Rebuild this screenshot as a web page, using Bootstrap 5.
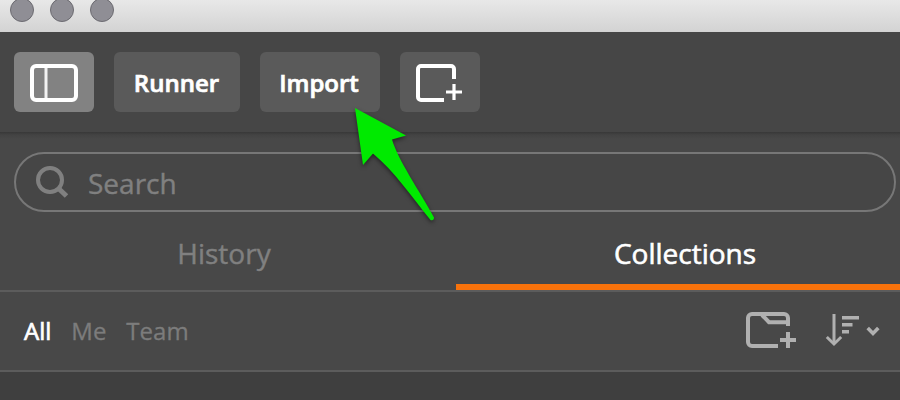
<!DOCTYPE html>
<html lang="en">
<head>
<meta charset="utf-8">
<meta name="viewport" content="width=device-width, initial-scale=1">
<title>Collections</title>
<link href="https://cdn.jsdelivr.net/npm/bootstrap@5.3.0/dist/css/bootstrap.min.css" rel="stylesheet">
<style>
body{width:900px;height:400px;background:#3f3f3f;font-family:"Open Sans",sans-serif;color:#fff}
.titlebar{height:32px;background:linear-gradient(#e8e8e8,#d3d3d3);padding-left:10px;gap:16px}
.dot{width:24px;height:24px;margin-top:-2px;border-radius:50%;background:#8f8e95;border:1.5px solid #6c6b71}
.toolbar{height:100px;background:#464646;padding-left:14px;gap:20px}
.tool{height:60px;width:80px;border:0;border-radius:6px;background:#5a5a5a;padding:0;color:#fff;font-size:24px;font-weight:600;line-height:62px;-webkit-text-stroke:.7px}
.tool:hover{background:#5a5a5a;color:#fff}
.tool.pressed{background:#828282}
.tool-runner{width:126px;padding-right:1px}
.tool-import{width:120px;padding-right:2px}
.sidebar{height:240px;background:linear-gradient(#383838,#434343 3px,#484848 7px);border-bottom:2px solid #5c5c5c}
.search{height:60px;margin:20px 4px 0 14px;border:2px solid #777;border-radius:30px;padding-left:20px;font-size:28px;color:#808080;background:#464646}
.search-text{padding-top:2px;-webkit-text-stroke:.4px}
.tabs{height:80px;border-bottom:2px solid #5c5c5c;font-size:28px;-webkit-text-stroke:.4px}
.tab{line-height:82px;color:#808080}
.tab-history{width:456px;padding-right:8px}
.tab-coll{width:444px;padding-left:14px;color:#fff;border-bottom:6px solid #f8720b;-webkit-text-stroke:.6px}
.filters{height:78px;padding:0 20px 0 24px;font-size:24px;color:#7c7c7c;-webkit-text-stroke:.3px}
.filters .current{color:#fff;-webkit-text-stroke:.7px}
svg{display:block;flex:none}
.pointer{left:340px;top:95px;filter:drop-shadow(0 2px 2px rgba(0,0,0,.5))}
</style>
</head>
<body class="position-relative overflow-hidden">
<header class="titlebar d-flex align-items-start"><span class="dot"></span><span class="dot"></span><span class="dot"></span></header>
<nav class="toolbar d-flex align-items-center">
  <button class="btn tool pressed d-flex align-items-center justify-content-center" aria-label="Toggle sidebar">
    <svg width="48" height="40" viewBox="0 0 48 40" fill="none" stroke="#fff"><rect x="2" y="4" width="44" height="34" rx="4" stroke-width="4"/><path d="M16 5v32" stroke-width="3" stroke-opacity=".9"/></svg>
  </button>
  <button class="btn tool tool-runner"><span>Runner</span></button>
  <button class="btn tool tool-import"><span>Import</span></button>
  <button class="btn tool" aria-label="New window">
    <svg width="80" height="60" viewBox="0 0 80 60" fill="none" stroke="#fff"><path d="M44 48H21a3 3 0 0 1-3-3V17a3 3 0 0 1 3-3H51a3 3 0 0 1 3 3V27" stroke-width="4"/><path d="M46 40H62M54 32V48" stroke-width="3.200"/></svg>
  </button>
</nav>
<main class="sidebar d-flex flex-column">
  <div class="search d-flex align-items-center">
    <svg width="52" height="56" viewBox="0 0 52 56" fill="none" stroke="#808080"><circle cx="14" cy="26" r="12" stroke-width="4"/><path d="M22 34l8.500 8" stroke-width="5"/></svg>
    <span class="search-text">Search</span>
  </div>
  <div class="tabs d-flex text-center">
    <div class="tab tab-history"><span>History</span></div>
    <div class="tab tab-coll"><span>Collections</span></div>
  </div>
  <div class="filters d-flex align-items-center">
    <span class="current">All</span><span class="ms-3 ps-1">Me</span><span class="ms-3 ps-1">Team</span>
    <svg class="ms-auto" width="136" height="48" viewBox="0 -4 136 48" fill="none" stroke="#b0b0b0">
      <path d="M34 35H8a4 4 0 0 1-4-4V7a4 4 0 0 1 4-4H40a4 4 0 0 1 4 4V15" stroke-width="4"/>
      <path d="M18 4l7 7.200H44" stroke-width="4"/><path d="M36 29H52M44 21V37" stroke-width="4"/>
      <path d="M90 3V33" stroke-width="3"/><path d="M82.800 26L90 33l7.200-7" stroke-width="3"/>
      <path d="M98 6.800h17M98 13.700h10.500M98 20.700h7" stroke-width="3.600"/>
      <path d="M123.700 17l5.300 5.400 5.300-5.400" stroke-width="3.600"/>
    </svg>
  </div>
</main>
<svg class="pointer position-absolute" width="110" height="135" viewBox="0 0 110 135"><path fill="#00ea00" d="M15 13L66 40.500L52 44.500C58 65 79 95 94 122.500Q94 126 90.500 125C71 101 55 77 33 58.500L23 70Z"/></svg>
<script src="https://cdn.jsdelivr.net/npm/bootstrap@5.3.0/dist/js/bootstrap.bundle.min.js"></script>
</body>
</html>
